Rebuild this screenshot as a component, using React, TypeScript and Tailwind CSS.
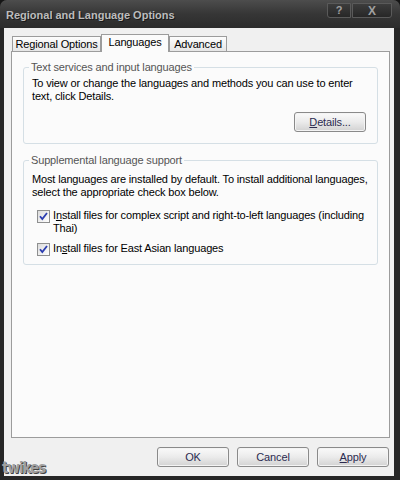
import React from "react";

const font = { fontFamily: '"Liberation Sans", Arial, sans-serif' };

function Check() {
  return (
    <div className="w-[13px] h-[13px] border border-[#8e8f8f] bg-gradient-to-br from-[#dcdcdc] to-[#ffffff] flex items-center justify-center shrink-0">
      <svg width="9" height="9" viewBox="0 0 9 9">
        <path d="M1 4.2 L3.3 7 L8 1" fill="none" stroke="#2b3db0" strokeWidth="1.8" />
      </svg>
    </div>
  );
}

function Btn({ children, w = 72 }: { children: React.ReactNode; w?: number }) {
  return (
    <div
      className="h-[20px] rounded-[3px] border border-[#8a8a8a] bg-gradient-to-b from-[#fafafa] via-[#ebebeb] to-[#d2d2d2] flex items-center justify-center text-[11px] text-[#2b2b50] shadow-[inset_0_0_0_1px_#f4f4f4]"
      style={{ width: w }}
    >
      {children}
    </div>
  );
}

export default function App() {
  return (
    <div className="w-[400px] h-[480px] bg-[#151515] text-[11px] text-black tracking-[-0.15px]" style={font}>
      <div className="w-[400px] h-[480px] bg-[#262626] rounded-t-[7px] flex flex-col">
        {/* title bar */}
        <div className="h-[28px] flex items-start rounded-t-[7px] bg-gradient-to-b from-[#4d4d4d] via-[#363636] to-[#2c2c2c] relative">
          <div className="pl-[6px] pt-[10px] text-[11px] font-bold text-[#bcbcbc] [text-shadow:1px_1px_0_#1a1a1a] leading-none tracking-[0px]">
            Regional and Language Options
          </div>
          <div className="absolute right-[8px] top-[3px] flex gap-[1px]">
            <div className="w-[24px] h-[15px] rounded-bl-[3px] border border-[#5a5a5a] bg-gradient-to-b from-[#3c3c3c] to-[#272727] flex items-center justify-center text-[11px] font-bold text-[#a0a0a0]">
              ?
            </div>
            <div className="w-[40px] h-[15px] rounded-br-[3px] border border-[#5a5a5a] bg-gradient-to-b from-[#3c3c3c] to-[#272727] flex items-center justify-center text-[12px] font-bold text-[#a0a0a0]">
              X
            </div>
          </div>
        </div>
        {/* client area */}
        <div className="ml-[4px] mr-[6px] h-[448px] bg-[#f0f0f0] flex flex-col pl-[7px] pr-[4px] pt-[6px] relative">
          {/* tabs */}
          <div className="flex items-end h-[17px] pl-[1px] relative z-10">
            <div className="w-[89px] h-[15px] border border-b-0 border-[#9c9c9c] bg-gradient-to-b from-[#fdfdfd] to-[#e6e6e6] flex items-center justify-center">
              Regional Options
            </div>
            <div className="w-[68px] h-[18px] border border-b-0 border-[#9c9c9c] bg-[#fbfbfb] flex items-center justify-center -mb-[1px] pb-[2px]">
              Languages
            </div>
            <div className="w-[58px] h-[15px] border border-b-0 border-[#9c9c9c] bg-gradient-to-b from-[#fdfdfd] to-[#e6e6e6] flex items-center justify-center">
              Advanced
            </div>
          </div>
          <div className="w-[379px] h-[387px] border border-[#9c9c9c] bg-[#fbfbfb] px-[11px] pt-[15px] flex flex-col gap-[16px]">
            {/* group 1 */}
            <div className="relative border border-[#d5dfe5] rounded-[3px] h-[77px] pt-[9px] pl-[8px]">
              <div className="absolute -top-[7px] left-[5px] px-[2px] bg-[#fbfbfb] text-[#555] leading-[13px] whitespace-nowrap">
                Text services and input languages
              </div>
              <div className="leading-[13px] whitespace-nowrap">
                To view or change the languages and methods you can use to enter
                <br />
                text, click Details.
              </div>
              <div className="absolute right-[11px] top-[44px]">
                <Btn w={72}>
                  <span>
                    <u>D</u>etails...
                  </span>
                </Btn>
              </div>
            </div>
            {/* group 2 */}
            <div className="relative border border-[#d5dfe5] rounded-[3px] h-[105px] pt-[12px] pl-[8px]">
              <div className="absolute -top-[7px] left-[5px] px-[2px] bg-[#fbfbfb] text-[#555] leading-[13px] whitespace-nowrap">
                Supplemental language support
              </div>
              <div className="leading-[13px] whitespace-nowrap">
                Most languages are installed by default. To install additional languages,
                <br />
                select the appropriate check box below.
              </div>
              <div className="flex items-start gap-[3px] pl-[5px] mt-[10px]">
                <div className="pt-[1px]">
                  <Check />
                </div>
                <div className="leading-[13px] whitespace-nowrap">
                  I<u>n</u>stall files for complex script and right-to-left languages (including
                  <br />
                  Thai)
                </div>
              </div>
              <div className="flex items-start gap-[3px] pl-[5px] mt-[7px]">
                <div className="pt-[1px]">
                  <Check />
                </div>
                <div className="leading-[13px] whitespace-nowrap">
                  In<u>s</u>tall files for East Asian languages
                </div>
              </div>
            </div>
          </div>
          {/* buttons */}
          <div className="flex justify-end gap-[8px] pt-[9px] pr-[1px]">
            <Btn w={72}>OK</Btn>
            <Btn w={72}>Cancel</Btn>
            <Btn w={72}>
              <span>
                <u>A</u>pply
              </span>
            </Btn>
          </div>
          <div
            className="absolute left-[-2px] bottom-[0px] text-[15px] font-bold text-[#a0a0a0] leading-none tracking-[-1px] [text-shadow:1px_1px_0_#444]"
            style={{ fontFamily: '"DejaVu Sans Condensed", "DejaVu Sans", sans-serif' }}
          >
            twikes
          </div>
        </div>
      </div>
    </div>
  );
}
